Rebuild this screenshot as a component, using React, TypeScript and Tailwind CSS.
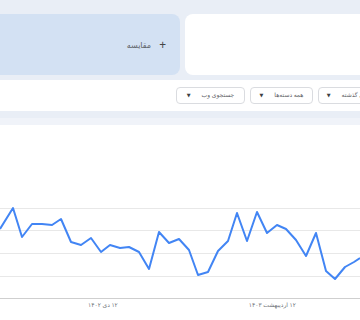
const points: [number, number][] = [
  [0, 229], [13, 208], [22, 237], [32, 224], [42, 224], [52, 225], [61, 219],
  [71, 242], [81, 245], [91, 238], [101, 252], [110, 245], [120, 248], [129, 247],
  [139, 252], [149, 269], [159, 232], [169, 243], [179, 239], [189, 250], [198, 275],
  [208, 272], [218, 251], [228, 241], [237, 213], [247, 241], [257, 212], [267, 233],
  [277, 225], [286, 229], [296, 240], [306, 256], [316, 233], [326, 271], [335, 279],
  [345, 267], [354, 262], [360, 258],
];

const font = { fontFamily: '"Noto Sans", "DejaVu Sans", sans-serif' };

const FilterButton = ({ label, width }: { label: string; width: string }) => (
  <div
    dir="rtl"
    className={`${width} h-[17px] shrink-0 flex items-center justify-center gap-[11px] rounded-[4px] border border-[#dadce0] bg-white text-[6px] text-[#5f6368] whitespace-nowrap`}
  >
    <span>{label}</span>
    <span className="text-[5px] text-[#3c4043]">▼</span>
  </div>
);

export default function App() {
  return (
    <div className="w-[360px] h-[320px] overflow-hidden bg-white" style={font}>
      {/* compare cards */}
      <div className="h-[80px] bg-[#e9eef6] pt-[14px] flex gap-[5px]">
        <div className="w-[180px] h-[61px] shrink-0 rounded-r-[8px] bg-[#d3e1f3] flex items-center justify-end pr-[14px]">
          <div dir="rtl" className="flex items-center gap-[8px] text-[8px] text-[#5f6368]">
            <span className="text-[12px] text-[#444746] leading-none">+</span>
            <span>مقایسه</span>
          </div>
        </div>
        <div className="w-[200px] h-[61px] shrink-0 rounded-l-[8px] bg-white" />
      </div>

      {/* filters */}
      <div className="h-[31px] bg-white flex items-center gap-[5px] pl-[176px]">
        <FilterButton label="جستجوی وب" width="w-[69px]" />
        <FilterButton label="همه دسته‌ها" width="w-[63px]" />
        <FilterButton label="۵ سال گذشته" width="w-[66px]" />
      </div>

      <div className="h-[7px] bg-[#e9eef6]" />
      <div className="h-[7px] bg-[#f0f3f9]" />

      {/* chart */}
      <div className="bg-white">
        <svg width="360" height="176" viewBox="0 0 360 176" className="block">
          {[83, 105, 128, 151].map((y) => (
            <line key={y} x1="0" x2="360" y1={y + 0.5} y2={y + 0.5} stroke="#e8e8e8" strokeWidth="1" />
          ))}
          <line x1="0" x2="360" y1="173.5" y2="173.5" stroke="#cfcfcf" strokeWidth="1" />
          <polyline
            points={points.map(([x, y]) => `${x},${y - 125}`).join(" ")}
            fill="none"
            stroke="#4285f4"
            strokeWidth="2"
            strokeLinejoin="round"
          />
        </svg>
        <div className="flex text-[6px] text-[#70757a] leading-none pt-[1px]">
          <span dir="rtl" className="ml-[88px]">۱۲ دی ۱۴۰۲</span>
          <span dir="rtl" className="ml-[131px]">۱۲ اردیبهشت ۱۴۰۳</span>
        </div>
      </div>
    </div>
  );
}
